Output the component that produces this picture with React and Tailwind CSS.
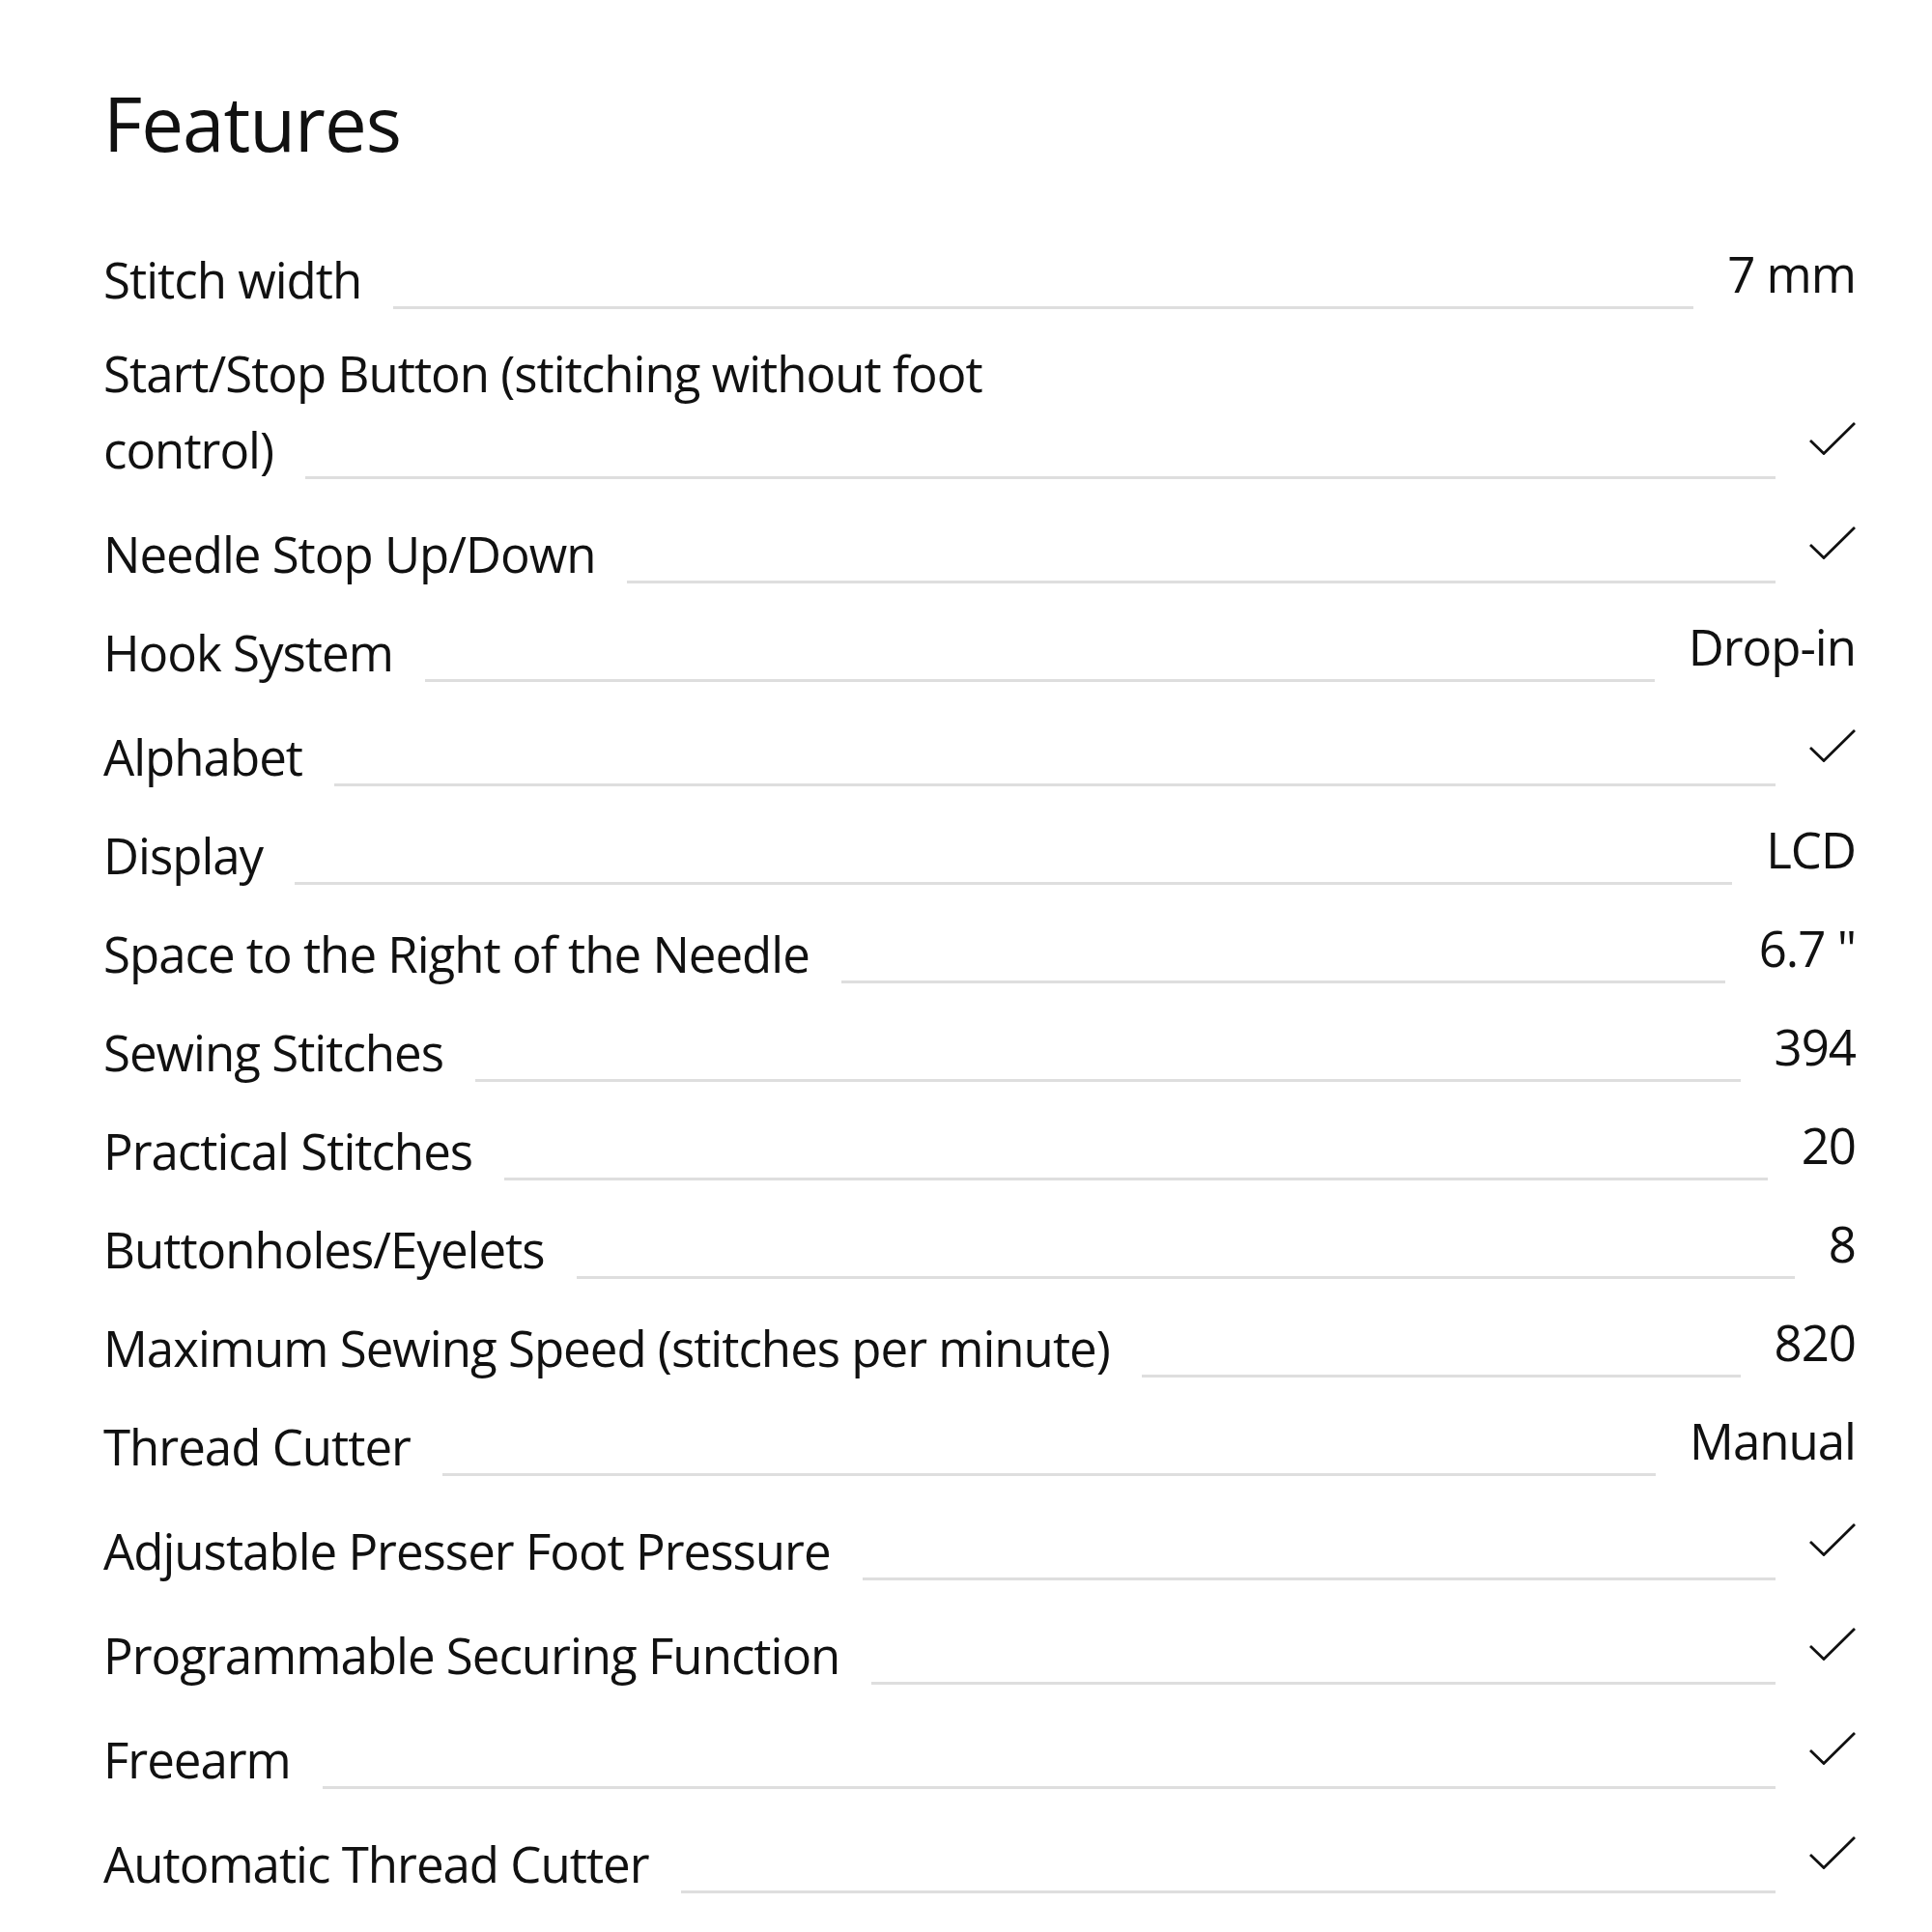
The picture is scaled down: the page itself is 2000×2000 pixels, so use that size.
const rows = [
  { label: ['Stitch width'], value: '7 mm' },
  { label: ['Start/Stop Button (stitching without foot', 'control)'], check: true, gap: 'pt-[18px]' },
  { label: ['Needle Stop Up/Down'], check: true },
  { label: ['Hook System'], value: 'Drop-in' },
  { label: ['Alphabet'], check: true },
  { label: ['Display'], value: 'LCD' },
  { label: ['Space to the Right of the Needle'], value: '6.7 "' },
  { label: ['Sewing Stitches'], value: '394' },
  { label: ['Practical Stitches'], value: '20' },
  { label: ['Buttonholes/Eyelets'], value: '8' },
  { label: ['Maximum Sewing Speed (stitches per minute)'], value: '820' },
  { label: ['Thread Cutter'], value: 'Manual' },
  { label: ['Adjustable Presser Foot Pressure'], check: true },
  { label: ['Programmable Securing Function'], check: true },
  { label: ['Freearm'], check: true },
  { label: ['Automatic Thread Cutter'], check: true },
];

function Check() {
  return (
    <svg width="48" height="34" viewBox="0 0 48 34" className="self-end mb-[34px] shrink-0">
      <path d="M1 19 L15 32.5 L47 1" fill="none" stroke="#111" strokeWidth="2.8" />
    </svg>
  );
}

function Row({ row, first }) {
  const pad = first ? '' : row.gap ? row.gap : row.check ? 'pt-[29px]' : 'pt-[23px]';
  const lines = row.label;
  const last = lines[lines.length - 1];
  return (
    <div className={pad}>
      {lines.slice(0, -1).map((l) => (
        <div key={l} className="leading-[79px]">{l}</div>
      ))}
      <div className="flex">
        <div className="leading-[79px] whitespace-nowrap">{last}</div>
        <div className="flex-1 self-end h-[3px] bg-[#dedede] mb-[9px] ml-[33px] mr-[35px]" />
        {row.check ? (
          <Check />
        ) : (
          <div className="self-start leading-[67px] whitespace-nowrap">{row.value}</div>
        )}
      </div>
    </div>
  );
}

export default function App() {
  return (
    <div className="min-h-[2000px] bg-white text-[#111] pl-[107px] pr-[79px] pt-[88px]" style={{ fontFamily: '"Open Sans", sans-serif' }}>
      <h2 className="text-[78px] leading-none font-normal tracking-[-1px]">Features</h2>
      <div className="mt-[84px] text-[51px] tracking-[-1px]">
        {rows.map((row, i) => (
          <Row key={row.label[0]} row={row} first={i === 0} />
        ))}
      </div>
    </div>
  );
}
